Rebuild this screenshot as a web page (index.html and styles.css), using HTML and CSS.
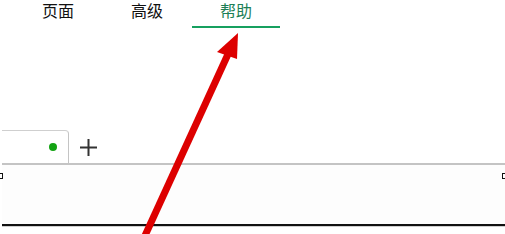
FILE: index.html
```html
<!DOCTYPE html>
<html lang="zh">
<head>
<meta charset="utf-8">
<link rel="stylesheet" href="styles.css">
</head>
<body>
<div class="page">
  <nav class="menu">
    <div class="menu-item">页面</div>
    <div class="menu-item">高级</div>
    <div class="menu-item active">帮助</div>
  </nav>
  <div class="sheet">
    <div class="tabs">
      <div class="tab"><span class="dot"></span></div>
      <div class="add">
        <svg width="17" height="17" viewBox="0 0 17 17"><path d="M8.5 0v17M0 8.5h17" stroke="#333" stroke-width="2" fill="none"/></svg>
      </div>
    </div>
    <div class="canvas"></div>
    <div class="rule"></div>
    <span class="handle handle-left"></span>
    <span class="handle handle-right"></span>
  </div>
  <svg class="arrow" width="505" height="234" viewBox="0 0 505 234">
    <line x1="143" y1="240" x2="229" y2="52" stroke="#dd0000" stroke-width="7"/>
    <polygon points="238,33 217,52 237,59" fill="#dd0000"/>
  </svg>
</div>
</body>
</html>
```

FILE: styles.css
```css
html, body {
  margin: 0;
  padding: 0;
  background: #ffffff;
  overflow: hidden;
}
.page {
  position: relative;
  width: 505px;
  height: 234px;
  font-family: "Noto Sans CJK SC", "Noto Sans", sans-serif;
}
.menu {
  display: flex;
  gap: 1px;
  padding-left: 14px;
  height: 28px;
}
.menu-item {
  width: 88px;
  height: 26px;
  text-align: center;
  font-size: 16px;
  line-height: 20px;
  color: #111;
  box-sizing: border-box;
}
.menu-item.active {
  color: #1d7f56;
  border-bottom: 2px solid #16a05f;
  height: 28px;
}
.sheet {
  position: relative;
  margin-top: 101px;
  padding-left: 2px;
}
.tabs {
  display: flex;
  align-items: flex-end;
  height: 34px;
  border-bottom: 2px solid #c4c4c4;
}
.tab {
  width: 67px;
  height: 33px;
  border-top: 1px solid #cfcfcf;
  border-right: 1px solid #c4c4c4;
  border-top-right-radius: 4px;
  display: flex;
  align-items: center;
  justify-content: flex-end;
  padding-right: 11px;
  box-sizing: border-box;
}
.dot {
  width: 8px;
  height: 8px;
  border-radius: 50%;
  background: #13a313;
}
.add {
  width: 38px;
  height: 34px;
  display: flex;
  align-items: center;
  justify-content: center;
  padding-top: 2px;
  box-sizing: border-box;
}
.add svg { display: block; }
.canvas {
  height: 59px;
  background: #fdfdfd;
}
.rule {
  height: 2px;
  background: #111;
  border-bottom: 1px solid #cfcfcf;
}
.handle {
  position: absolute;
  top: 44px;
  width: 3px;
  height: 4px;
  border: 1px solid #111;
  background: #fff;
}
.handle-left { left: -2px; }
.handle-right { right: -2px; }
.arrow {
  position: absolute;
  left: 0;
  top: 0;
  pointer-events: none;
}
```
